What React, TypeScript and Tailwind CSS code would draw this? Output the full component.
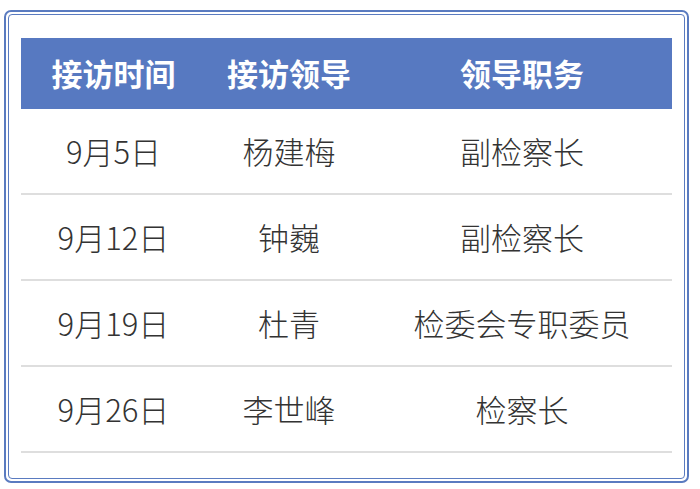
import React from 'react';

const rows = [
  { date: '9月5日', leader: '杨建梅', title: '副检察长' },
  { date: '9月12日', leader: '钟巍', title: '副检察长' },
  { date: '9月19日', leader: '杜青', title: '检委会专职委员' },
  { date: '9月26日', leader: '李世峰', title: '检察长' },
];

export default function App() {
  return (
    <div
      className="w-[700px] h-[489px] bg-white pt-[10px] pl-[4px]"
      style={{ fontFamily: '"Noto Sans CJK SC", "Noto Sans", sans-serif' }}
    >
      <div className="w-[685px] h-[473px] border-2 border-[#5a7bc0] rounded-[7px] p-[2px]">
        <div className="h-full border-[1.5px] border-[#5a7bc0] rounded-[4px] pt-[23px] px-[12px]">
          <div className="grid grid-cols-[185px_166px_1fr] h-[71px] bg-[#5779c1] text-white font-bold text-[31px] items-center text-center">
            <div>接访时间</div>
            <div>接访领导</div>
            <div>领导职务</div>
          </div>
          {rows.map((r) => (
            <div
              key={r.date}
              className="grid grid-cols-[185px_166px_1fr] h-[86px] border-b-2 border-[#dedede] text-[#333333] text-[31px] font-light items-center text-center"
            >
              <div>{r.date}</div>
              <div>{r.leader}</div>
              <div>{r.title}</div>
            </div>
          ))}
        </div>
      </div>
    </div>
  );
}
